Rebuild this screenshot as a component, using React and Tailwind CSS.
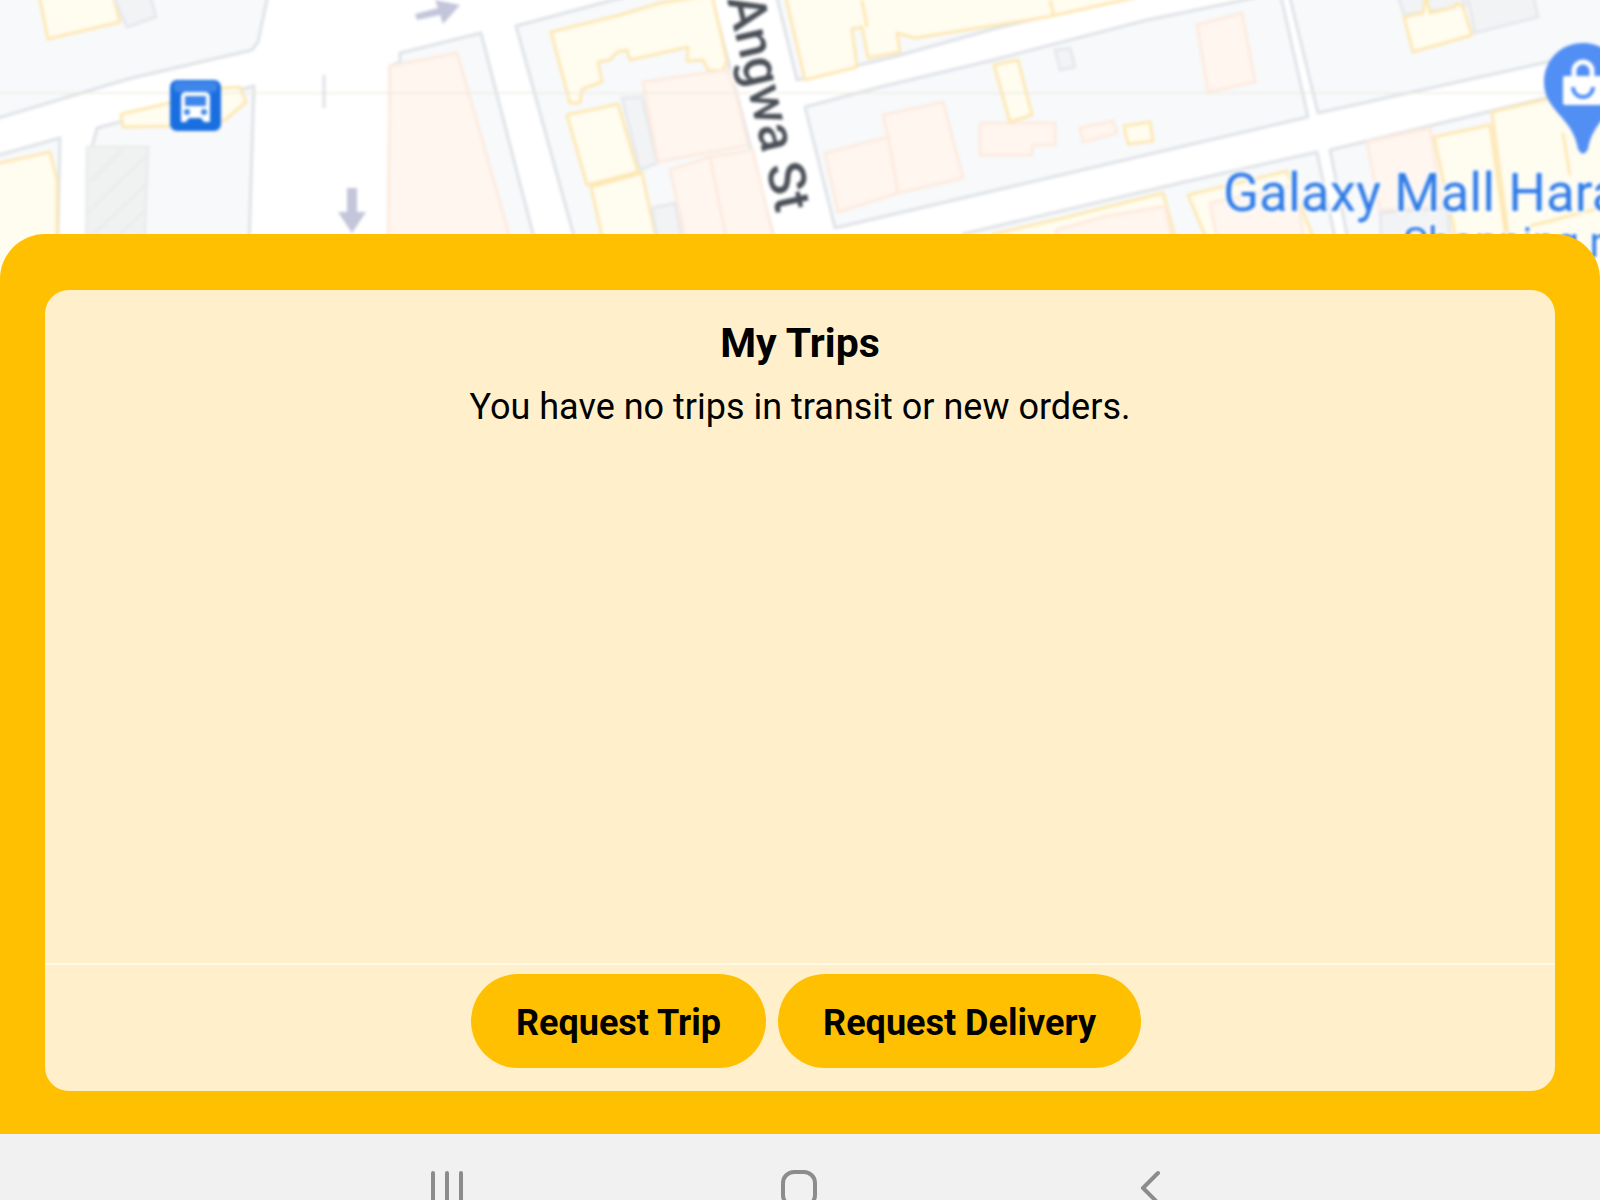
const tones = {
  block: ["#f7f9fb", "#dfe2e7"],
  yellow: ["#fffcf0", "#fde8b4"],
  peach: ["#fff6f0", "#fdebde"],
  grey: ["#f1f3f5", "#e6e8ec"],
  plain: ["#f0f2f1", "#ebedec"],
};

function Shape({ d, tone }) {
  const [fill, stroke] = tones[tone];
  return <polygon points={d} fill={fill} stroke={stroke} strokeWidth="3" strokeLinejoin="round" />;
}

const shapes = [
  // city blocks
  ["block", "-5,119 128,79 252,50 258,42 268,-5 -5,-5"],
  ["block", "-5,156 60,138 57,280 -5,280"],
  ["block", "92,147 97,128 254,86 248,280 90,280"],
  ["block", "388,280 390,66 400,62 400,53 481,33 545,280"],
  ["block", "516,26 613,0 640,-6 711,-6 785,280 586,280"],
  ["block", "776,-6 797,80 897,56 997,28 1133,-4"],
  ["block", "805,107 880,87 993,60 1147,20 1230,3 1280,-8 1308,117 1180,147 835,228"],
  ["block", "1289,-6 1318,113 1543,63 1610,48 1610,-6"],
  ["block", "963,234 1180,183 1317,152 1344,280 963,280"],
  ["block", "1330,150 1487,112 1610,82 1610,280 1356,280"],
  // north-west
  ["yellow", "39,-5 48,39 120,22 113,-5"],
  ["grey", "113,-5 127,27 156,17 150,-5"],
  ["yellow", "-5,164 50,152 57,180 57,280 -5,280"],
  ["yellow", "121,114 165,104 223,88 240,87 246,102 225,120 170,126 123,127"],
  ["plain", "87,147 148,147 143,280 86,280"],
  // either side of the avenue
  ["peach", "390,66 457,53 475,115 522,280 388,280"],
  ["yellow", "551,32 620,15 660,3 712,-5 727,62 722,71 708,70 703,60 687,61 688,47 630,60 627,50 617,52 610,60 598,62 602,82 582,89 580,103 570,103"],
  ["grey", "622,98 642,97 657,163 640,170"],
  ["yellow", "567,115 618,104 638,172 587,185"],
  ["yellow", "591,187 642,173 665,280 612,280"],
  ["grey", "652,208 675,203 690,280 665,280"],
  ["peach", "643,82 727,70 735,90 748,145 658,162"],
  ["peach", "670,170 710,157 735,280 695,280"],
  ["peach", "710,157 753,150 783,280 735,280"],
  // centre
  ["yellow", "785,-6 805,80 857,67 852,29 862,27 868,58 900,52 897,33 915,38 1047,17 1147,-5"],
  ["peach", "883,115 943,102 963,178 898,193 888,137"],
  ["peach", "825,153 888,137 898,193 838,212"],
  ["peach", "980,123 1055,123 1055,145 1033,145 1032,155 980,155"],
  ["yellow", "994,65 1018,60 1032,115 1010,122"],
  ["grey", "1055,50 1070,48 1075,67 1060,70"],
  ["peach", "1080,128 1113,121 1117,133 1083,142"],
  ["yellow", "1124,126 1150,122 1153,141 1128,144"],
  ["peach", "1197,25 1242,13 1255,82 1208,92"],
  // north-east
  ["grey", "1398,-5 1404,15 1465,6 1462,-5"],
  ["grey", "1467,-5 1475,33 1538,17 1533,-5"],
  ["yellow", "1404,17 1423,13 1426,-5 1430,13 1455,7 1457,3 1463,7 1472,35 1413,52"],
  // south-east
  ["yellow", "993,234 1063,218 1163,193 1187,280 993,280"],
  ["peach", "1056,230 1103,217 1165,206 1180,280 1056,280"],
  ["yellow", "1188,195 1287,171 1330,280 1224,280"],
  ["peach", "1210,203 1296,185 1310,280 1225,280"],
  ["peach", "1367,142 1430,128 1442,207 1380,210"],
  ["grey", "1380,213 1447,208 1455,280 1384,280"],
  ["yellow", "1434,137 1490,125 1512,280 1465,280"],
  ["yellow", "1492,112 1543,100 1610,84 1610,280 1514,280"],
];

function CityMap() {
  return (
    <svg
      className="block h-[280px] w-full shrink-0 bg-white"
      viewBox="0 0 1600 280"
      preserveAspectRatio="xMidYMin slice"
      role="img"
      aria-label="Map around Angwa St and Galaxy Mall Harare"
    >
      <defs>
        <filter id="soft" x="0" y="0" width="100%" height="100%" colorInterpolationFilters="sRGB">
          <feGaussianBlur stdDeviation="1.6" />
        </filter>
      </defs>
      <g filter="url(#soft)">
        <rect width="1600" height="280" fill="#fff" />
        {shapes.map(([tone, d]) => (
          <Shape key={d} tone={tone} d={d} />
        ))}
        <g stroke="#fde8b4" strokeWidth="3" fill="none">
          <path d="M862 0L867 27M1050 0L1054 17M1563 133L1570 175M1600 208L1530 226" />
        </g>
        <g stroke="#e9ebeb" strokeWidth="2">
          <path d="M90 182L122 150M88 212L146 156M92 236L146 184M118 236L144 212" />
        </g>
        <path d="M0 93H1600" stroke="#ebe8dc" strokeOpacity="0.6" strokeWidth="2" />
        <path d="M324 75V108" stroke="#dfe1e6" strokeWidth="3" />
        <g fill="#c3c6da">
          <path d="M347 188H357V212H366L352 233L338 212H347Z" />
          <path d="M415 14L438 8L435 0L460 5L443 24L440 15L417 20Z" />
        </g>
        <g>
          <rect x="170" y="80" width="51" height="51" rx="7" fill="#1a6fe0" />
          <rect x="174" y="82" width="43" height="10" rx="4" fill="#3f86ea" />
          <path d="M181 97q0-5 5-5h18q6 0 6 5v25h-6l-3-4h-12l-3 4h-5z" fill="#fff" />
          <rect x="185" y="96" width="21" height="10" fill="#3f86ea" />
          <circle cx="187" cy="112" r="3" fill="#3f86ea" />
          <circle cx="204" cy="112" r="3" fill="#3f86ea" />
        </g>
        <g>
          <path
            d="M1583 43C1561 43 1544 60 1544 82C1544 111 1573 117 1578 149Q1583 158 1588 149C1593 117 1622 111 1622 82C1622 60 1605 43 1583 43Z"
            fill="#528ff4"
          />
          <rect x="1563" y="76" width="40" height="29" rx="2" fill="#fff" />
          <path d="M1574 78V71a9 9 0 0 1 18 0V78" fill="none" stroke="#fff" strokeWidth="5" />
          <path d="M1573 87a10 10 0 0 0 20 0" fill="none" stroke="#528ff4" strokeWidth="4" />
        </g>
        <g fontFamily="Roboto, sans-serif" paintOrder="stroke" stroke="#fff" strokeLinejoin="round">
          <text
            transform="translate(727 -1) rotate(77)"
            fontSize="52"
            fontWeight="500"
            fill="#4b5058"
            strokeWidth="6"
          >
            Angwa St
          </text>
          <g fill="#2f7be6" strokeWidth="4">
            <text x="1223" y="211" fontSize="53">
              Galaxy Mall Harare
            </text>
            <text x="1403" y="257" fontSize="42">
              Shopping mall
            </text>
          </g>
        </g>
      </g>
    </svg>
  );
}

function RequestButton({ children }) {
  return (
    <button
      type="button"
      className="h-[94px] rounded-[47px] bg-[#ffc002] px-[45px] pt-1 text-[36px] font-bold leading-[44px]"
    >
      {children}
    </button>
  );
}

export default function App() {
  return (
    <div className="flex h-screen flex-col overflow-hidden bg-white font-[Roboto,sans-serif] text-black">
      <CityMap />
      <main className="relative -mt-[46px] flex grow flex-col rounded-t-[45px] bg-[#ffc002] px-[45px] pb-[43px] pt-14">
        <section className="flex grow flex-col overflow-hidden rounded-3xl bg-[#fff0cb]">
          <div className="grow border-b-2 border-[#fffae6] pt-7 text-center">
            <h1 className="text-[41px] font-bold leading-[50px]">My Trips</h1>
            <p className="mt-4 text-[36px] leading-[46px]">
              You have no trips in transit or new orders.
            </p>
          </div>
          <div className="flex justify-center gap-3 pb-[23px] pl-3 pt-[9px]">
            <RequestButton>Request Trip</RequestButton>
            <RequestButton>Request Delivery</RequestButton>
          </div>
        </section>
      </main>
      <nav className="flex h-[66px] shrink-0 items-start justify-center gap-[311px] overflow-hidden bg-[#f1f1f1] pr-[2px] pt-[34px] text-[#8c8c8c]">
        <button type="button" aria-label="Recent apps">
          <svg width="40" height="40" viewBox="0 0 40 40" fill="none" stroke="currentColor" strokeWidth="4" strokeLinecap="round">
            <path d="M5 5V37M19 5V37M33 5V37" />
          </svg>
        </button>
        <button type="button" aria-label="Home">
          <svg width="40" height="40" viewBox="0 0 40 40" fill="none" stroke="currentColor" strokeWidth="4">
            <rect x="4" y="4" width="32" height="34" rx="11" />
          </svg>
        </button>
        <button type="button" aria-label="Back">
          <svg width="40" height="40" viewBox="0 0 40 40" fill="none" stroke="currentColor" strokeWidth="4" strokeLinecap="round" strokeLinejoin="round">
            <path d="M28 5L13 20L28 35" />
          </svg>
        </button>
      </nav>
    </div>
  );
}
